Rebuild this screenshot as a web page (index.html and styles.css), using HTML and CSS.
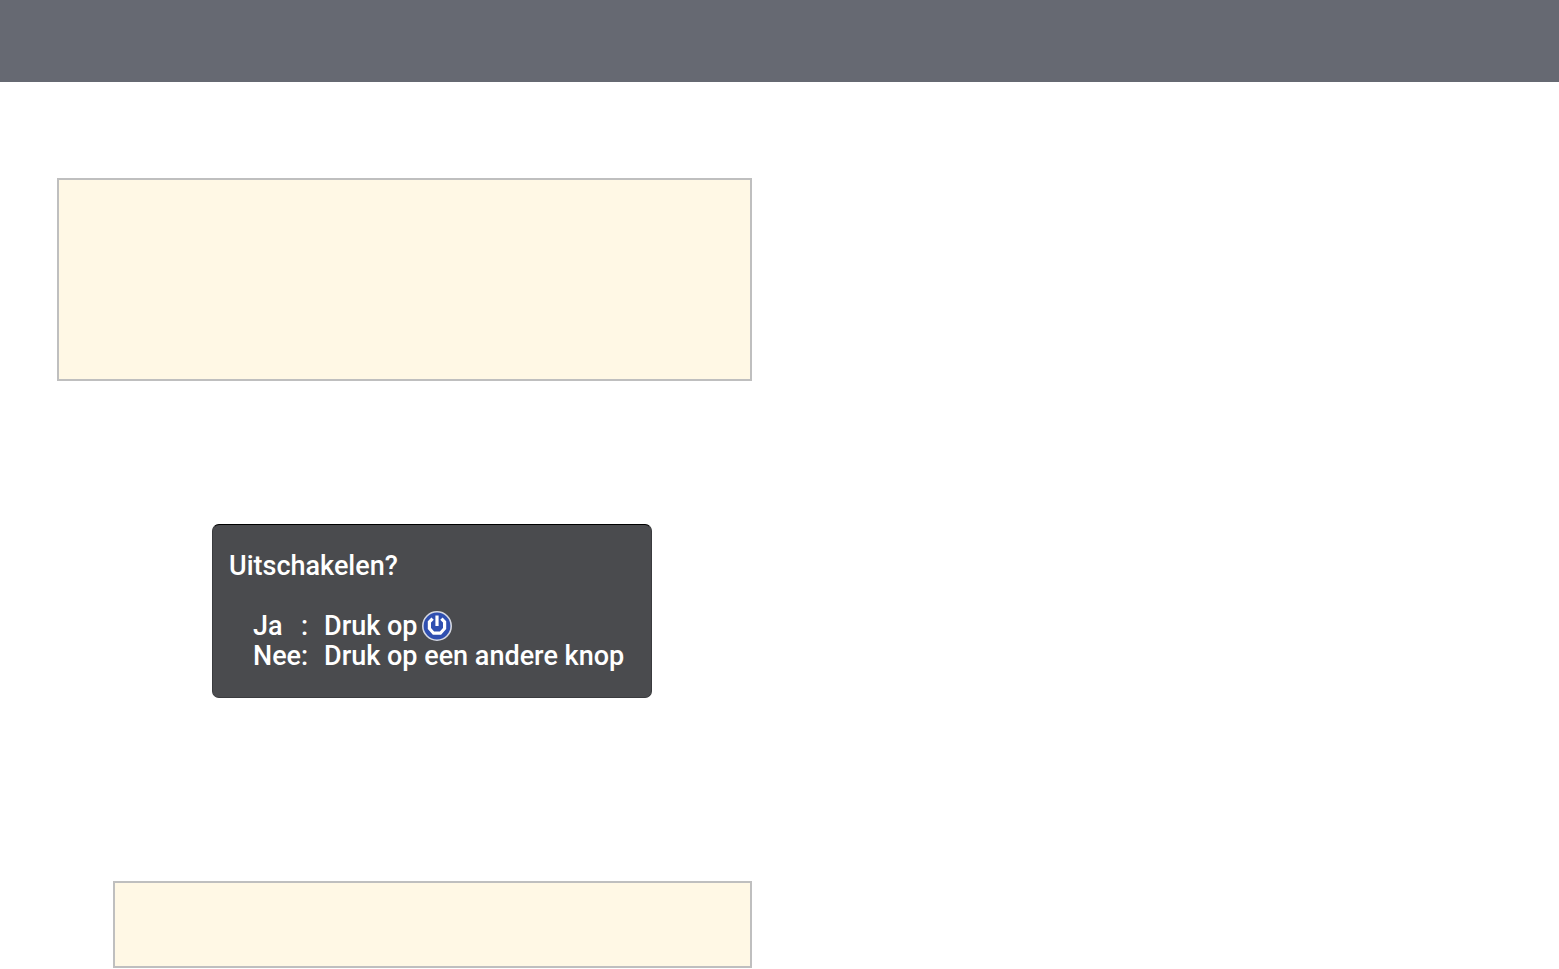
FILE: index.html
```html
<!DOCTYPE html>
<html lang="nl">
<head>
    <meta charset="UTF-8">
    <meta name="viewport" content="width=device-width, initial-scale=1.0">
    <title>Uitschakelen</title>
    <link rel="stylesheet" href="styles.css">
</head>
<body>

    <header class="page-header"></header>

    <main class="columns">
        <div class="column">
            <div class="note note-large"></div>

            <section class="dialog">
                <p class="dialog-title">Uitschakelen?</p>
                <dl class="choices">
                    <dt>Ja</dt>
                    <dd>:</dd>
                    <dd class="action">Druk op
                        <svg class="power-icon" viewBox="0 0 30 30" role="img" aria-label="aan/uit">
                            <circle cx="15" cy="15" r="14.2" fill="#2f4fb0" stroke="#d5d8e2" stroke-width="1.6"/>
                            <path d="M10.6 7.6 L7.4 11 V17.5 L11.6 22.2 H18.4 L22.6 17.5 V11 L19.4 7.6" fill="none" stroke="#fff" stroke-width="3.2"/>
                            <path d="M15 4.5 V15" stroke="#fff" stroke-width="3.2"/>
                        </svg>
                    </dd>
                    <dt>Nee</dt>
                    <dd>:</dd>
                    <dd class="action">Druk op een andere knop</dd>
                </dl>
            </section>

            <div class="note note-small"></div>
        </div>
        <div class="column"></div>
    </main>

</body>
</html>
```

FILE: styles.css
```css
* {
    box-sizing: border-box;
}

body {
    margin: 0;
    background-color: #fff;
    font-family: Roboto, "Liberation Sans", sans-serif;
}

.page-header {
    height: 82px;
    background-color: #666972;
}

.columns {
    display: grid;
    grid-template-columns: 1fr 1fr;
    column-gap: 56px;
    padding: 96px 56px 0 57px;
}

.column {
    display: flex;
    flex-direction: column;
}

.note {
    border: 2px solid #bfbfbf;
    background-color: #fff8e5;
}

.note-large {
    min-height: 203px;
}

.note-small {
    min-height: 87px;
    margin-left: 56px;
}

/* projector message */
.dialog {
    align-self: center;
    width: 440px;
    margin: 143px 0 183px 55px;
    padding: 26px 16px;
    border: 1px solid #3a3b3e;
    border-top-color: #000;
    border-radius: 7px;
    background-color: #4a4b4e;
    color: #fff;
    font-size: 27px;
    font-weight: 500;
    line-height: 30px;
}

.dialog-title {
    margin: 0 0 30px;
}

.choices {
    display: grid;
    grid-template-columns: 48px 23px 1fr;
    margin: 0 0 0 24px;
}

.choices dd {
    margin: 0;
}

.action {
    display: flex;
    align-items: center;
    gap: 5px;
    white-space: nowrap;
}

.power-icon {
    width: 30px;
    height: 30px;
}
```
